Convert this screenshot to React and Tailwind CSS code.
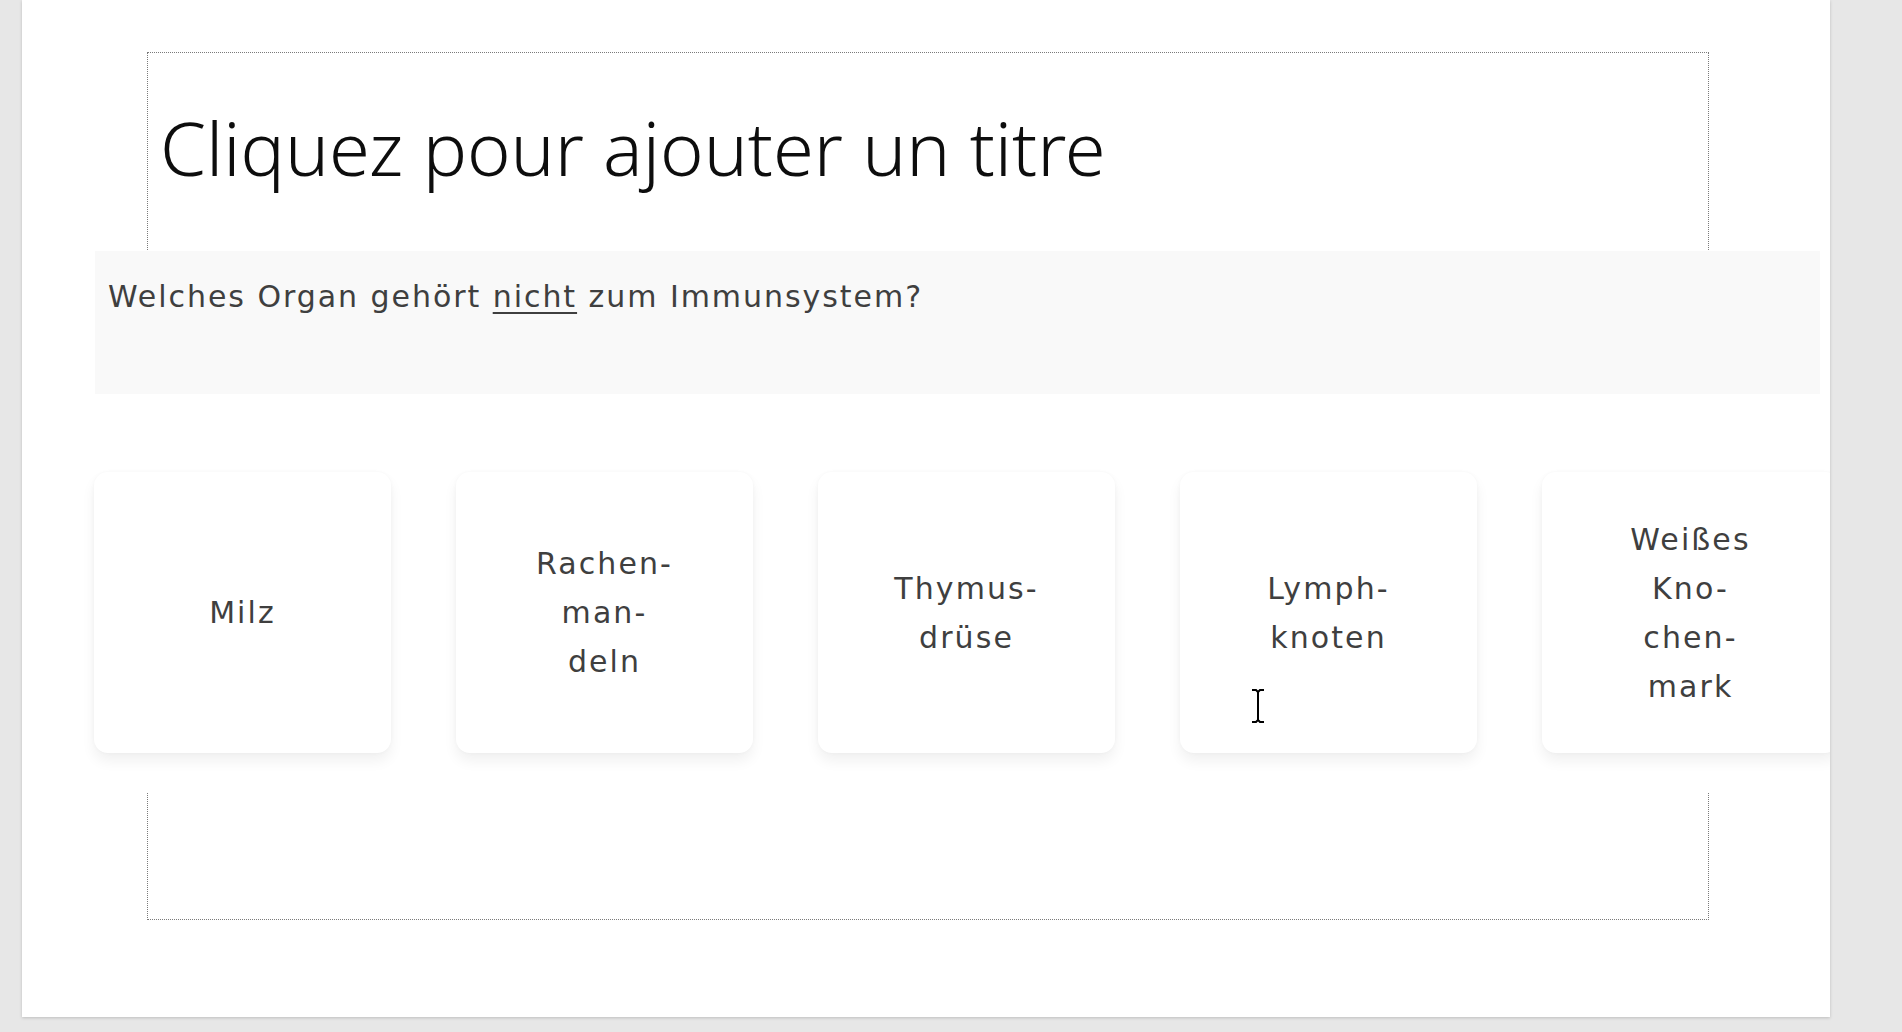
import React from "react";

const answers = [
  ["Milz"],
  ["Rachen-", "man-", "deln"],
  ["Thymus-", "drüse"],
  ["Lymph-", "knoten"],
  ["Weißes", "Kno-", "chen-", "mark"],
];

const IBeam = () => (
  <svg width="18" height="36" viewBox="0 0 18 36" className="absolute left-[1227px] top-[688px]">
    <path
      d="M3 2h4l2 2 2-2h4M9 4v28M3 34h4l2-2 2 2h4"
      fill="none"
      stroke="#fff"
      strokeWidth="4"
    />
    <path
      d="M3 2h4l2 2 2-2h4M9 4v28M3 34h4l2-2 2 2h4"
      fill="none"
      stroke="#000"
      strokeWidth="2"
    />
  </svg>
);

export default function App() {
  return (
    <div className="w-[1902px] h-[1032px] bg-[#e7e7e7] overflow-hidden">
      <div className="relative ml-[22px] w-[1808px] h-[1017px] bg-white overflow-hidden shadow-[0_1px_3px_rgba(0,0,0,0.18)]">
        {/* title placeholder */}
        <div className="absolute left-[125px] top-[52px] w-[1562px] h-[868px] border border-dotted border-[#7a7a7a]">
          <h1
            className="pl-[12px] pt-[58px] text-[74px] leading-none font-light text-[#0d0d0d]"
            style={{ fontFamily: '"Noto Sans", "Open Sans", sans-serif' }}
          >
            Cliquez pour ajouter un titre
          </h1>
        </div>

        {/* quiz overlay */}
        <div
          className="absolute left-[73px] top-[251px] w-[1725px] h-[542px] bg-white text-[#3f3f3f]"
          style={{ fontFamily: '"DejaVu Sans", "Open Sans", sans-serif' }}
        >
          <div className="h-[143px] bg-[#f9f9f9] pl-[13px] pt-[26px] text-[30px] leading-[40px] tracking-[0.065em]">
            Welches Organ gehört{" "}
            <span className="underline decoration-2 underline-offset-[5px]">nicht</span>{" "}
            zum Immunsystem?
          </div>

          <div className="flex gap-[65px] mt-[78px] -ml-[1px]">
            {answers.map((lines, i) => (
              <div
                key={i}
                className="shrink-0 w-[297px] h-[281px] rounded-[14px] bg-white shadow-[0_8px_14px_rgba(0,0,0,0.06),0_0_4px_rgba(0,0,0,0.03)] flex flex-col items-center justify-center text-center text-[30px] leading-[49px] tracking-[0.07em]"
              >
                {lines.map((l) => (
                  <span key={l}>{l}</span>
                ))}
              </div>
            ))}
          </div>
        </div>

        <IBeam />
      </div>
    </div>
  );
}
